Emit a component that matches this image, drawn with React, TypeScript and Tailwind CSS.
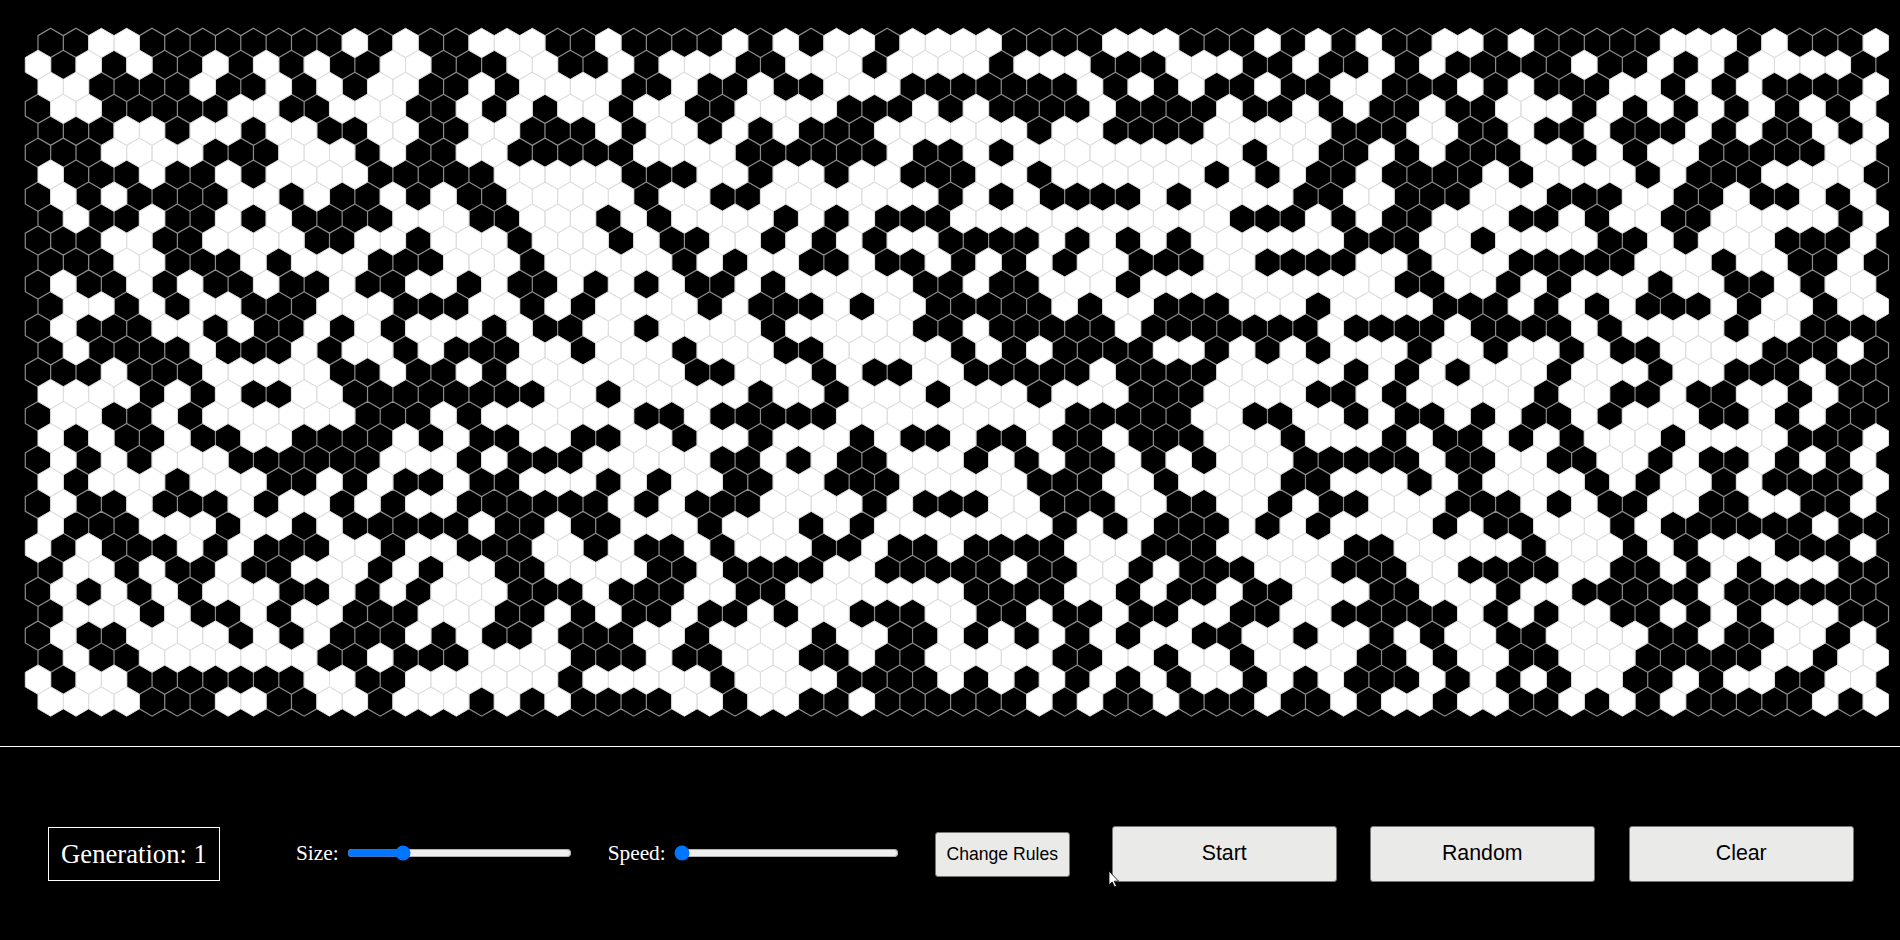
import React from 'react';

// one row per line, 1 = black cell, 0 = white cell (73 columns, 31 rows)
const GRID: [string, string, string][] = [
  ['110011111111010110001101', '111010100100001111000111', '0101011001011111000101110'],
  ['010101101010110011100110', '100011000100001000111000', '1101101011111011010100001'],
  ['001111011010100110100001', '101101100011111110101011', '0110011101011100101011110'],
  ['100111110011000110101001', '001100001110101111011110', '1101011011000101010101010'],
  ['111001001001100110011101', '001010111000000100111100', '0001110011011011101011010'],
  ['111000011100010110011111', '000011111101101000000000', '1001101011100101001111100'],
  ['011101101000011111000001', '110010010011100100000010', '1011011110100001011100001'],
  ['101011110010110101100000', '100110000000101011110100', '0011001110001110011011010'],
  ['101101101011110001100010', '100001010111000000000001', '1101011000110100110000010'],
  ['111001100001100100010001', '011001010100111101010100', '0000111001000011010001110'],
  ['111001110100011100010000', '010100110110101010011100', '1111001000111110001001101'],
  ['101101011011011001011010', '101101000001101100010000', '0000001100101000100110100'],
  ['100101001110001110010100', '001011101001111101001110', '0010000111010101110100100'],
  ['101110010110101000101100', '100001000001101111101111', '1110111101111010000100111'],
  ['101111011101001011100100', '010001100000101011110010', '1010001001001011000011101'],
  ['111011100000110110100000', '001100010110011111011110', '0000101010001000100111011'],
  ['000010101100111111110010', '000010010001000100011100', '0011010000010011011001011'],
  ['100110100000011101000000', '110111110000000001111100', '1100101101011010001101011'],
  ['010110110011110101100110', '010010001011011011011100', '0100010110101000100001110'],
  ['101010001111110001011100', '000110101100010101101010', '0011111011001100101101010'],
  ['010001000110101101100010', '100110011100000111001000', '0110001010000101001011110'],
  ['101101110100101001111110', '101110000101110011100110', '0101100011101011001100110'],
  ['011100010010111110110110', '001000101000000010101110', '1010000101100010111111011'],
  ['010111010111001001110010', '110100011011011110001110', '0000110000010001010001110'],
  ['100101101100010100110000', '110111100111110110010111', '0001110011110011010100011'],
  ['101010100011010100011101', '110011000000011110010110', '1100011000100111110111111'],
  ['100010110100111000110101', '101101001110011011011001', '1001111101010011010100011'],
  ['101100001010111010110111', '001000010011010101010011', '0010010100110000110110010'],
  ['101100000001101110000111', '011000110110000011001001', '0000110100110001111100100'],
  ['010011111110011000000100', '000100001111010101010100', '1010111010101001101001100'],
  ['000011100110010001010111', '100100110111111010110111', '0110100100110101011111010'],
];

const W = 25.35;
const R = W / Math.sqrt(3);
const ROW_H = R * 1.5;
const LEFT = 25.3;
const TOP = 28.3;

function hexPath(row: number, col: number) {
  const cx = LEFT + W / 2 + col * W + (row % 2 === 0 ? W / 2 : 0);
  const cy = TOP + R + row * ROW_H;
  const p = [
    [cx, cy - R],
    [cx + W / 2, cy - R / 2],
    [cx + W / 2, cy + R / 2],
    [cx, cy + R],
    [cx - W / 2, cy + R / 2],
    [cx - W / 2, cy - R / 2],
  ];
  return 'M' + p.map(([x, y]) => `${x.toFixed(2)} ${y.toFixed(2)}`).join('L') + 'Z';
}

function HexBoard() {
  let black = '';
  let white = '';
  GRID.forEach((parts, row) => {
    parts.join('').split('').forEach((v, col) => {
      if (v === '1') black += hexPath(row, col);
      else white += hexPath(row, col);
    });
  });
  return (
    <svg width="1900" height="746" className="block">
      <path d={black} fill="#000" stroke="#8c8c8c" strokeWidth="1.2" />
      <path d={white} fill="#fff" stroke="#dedede" strokeWidth="1" />
    </svg>
  );
}

function Cursor() {
  return (
    <svg width="12" height="18" viewBox="0 0 12 18" className="absolute left-[1108px] top-[870px]">
      <path d="M1 1v14l3.2-3 2.3 5 2-1-2.3-4.8H10.500z" fill="#fff" stroke="#000" strokeWidth="0.8" />
    </svg>
  );
}

export default function App() {
  return (
    <div className="relative h-[940px] w-[1900px] overflow-hidden bg-black">
      <div className="h-[747px] border-b border-white">
        <HexBoard />
      </div>
      <div className="flex h-[193px] items-center pt-[20px] pl-[48px] font-['Liberation_Serif',serif] text-white">
        <div className="flex h-[54px] w-[172px] items-center justify-center border border-white text-[26.67px]">
          Generation: 1
        </div>
        <label className="ml-[76px] flex items-center text-[21.33px]">
          Size:
          <input type="range" min={0} max={100} defaultValue={23} className="ml-[8px] w-[225px]" />
        </label>
        <label className="ml-[36px] flex items-center text-[21.33px]">
          Speed:
          <input type="range" min={0} max={100} defaultValue={0} className="ml-[8px] w-[225px]" />
        </label>
        <button className="mt-[1px] ml-[36px] h-[45px] w-[135px] rounded-[3px] border border-[#767676] bg-[#eaeae8] font-['Liberation_Sans',sans-serif] text-[17.6px] text-black">
          Change Rules
        </button>
        <button className="mt-[1px] ml-[42px] h-[56px] w-[225px] rounded-[3px] border border-[#767676] bg-[#eaeae8] font-['Liberation_Sans',sans-serif] text-[21.33px] text-black">
          Start
        </button>
        <button className="mt-[1px] ml-[33px] h-[56px] w-[225px] rounded-[3px] border border-[#767676] bg-[#eaeae8] font-['Liberation_Sans',sans-serif] text-[21.33px] text-black">
          Random
        </button>
        <button className="mt-[1px] ml-[34px] h-[56px] w-[225px] rounded-[3px] border border-[#767676] bg-[#eaeae8] font-['Liberation_Sans',sans-serif] text-[21.33px] text-black">
          Clear
        </button>
      </div>
      <Cursor />
    </div>
  );
}
